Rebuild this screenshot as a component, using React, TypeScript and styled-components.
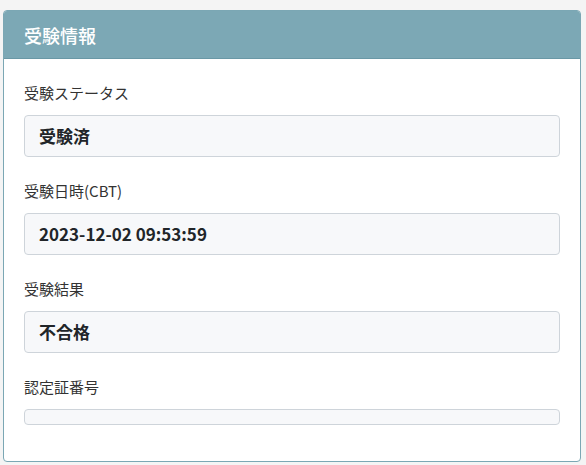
import styled, { createGlobalStyle } from 'styled-components';

const GlobalStyle = createGlobalStyle`
  body {
    margin: 0;
    background: #f4f4f4;
    font-family: "Noto Sans CJK JP", "Noto Sans", sans-serif;
  }
`;

interface Item {
  label: string
  value: string
}

const items: Item[] = [
  { label: '受験ステータス', value: '受験済' },
  { label: '受験日時(CBT)', value: '2023-12-02 09:53:59' },
  { label: '受験結果', value: '不合格' },
  { label: '認定証番号', value: '' },
];

function App() {
  return (
    <Page>
      <GlobalStyle />
      <Card>
        <Header>受験情報</Header>
        <Body>
          {items.map((item) => (
            <Group key={item.label}>
              <Label>{item.label}</Label>
              <Field>{item.value}</Field>
            </Group>
          ))}
        </Body>
      </Card>
    </Page>
  );
}

export default App;

const Page = styled.div`
  padding: 10px 5px 3px 3px;
`;

const Card = styled.div`
  border: 1px solid #7ba7b4;
  border-radius: 4px;
  background: #fff;
  overflow: hidden;
`;

const Header = styled.div`
  height: 47px;
  display: flex;
  align-items: center;
  padding: 0 20px;
  background: #7ca8b5;
  border-bottom: 1px solid #6a98a6;
  color: #fff;
  font-size: 18px;
  font-weight: 500;
`;

const Body = styled.div`
  padding: 22px 20px 14px;
`;

const Group = styled.div`
  margin-bottom: 22px;
`;

const Label = styled.div`
  font-size: 15px;
  line-height: 24px;
  color: #333;
  margin-bottom: 10px;
`;

const Field = styled.div`
  background: #f7f8fa;
  border: 1px solid #ced4da;
  border-radius: 4px;
  padding: 7px 14px;
  line-height: 26px;
  font-size: 17px;
  font-weight: 700;
  color: #212529;
  &:empty {
    height: 0;
  }
`;
